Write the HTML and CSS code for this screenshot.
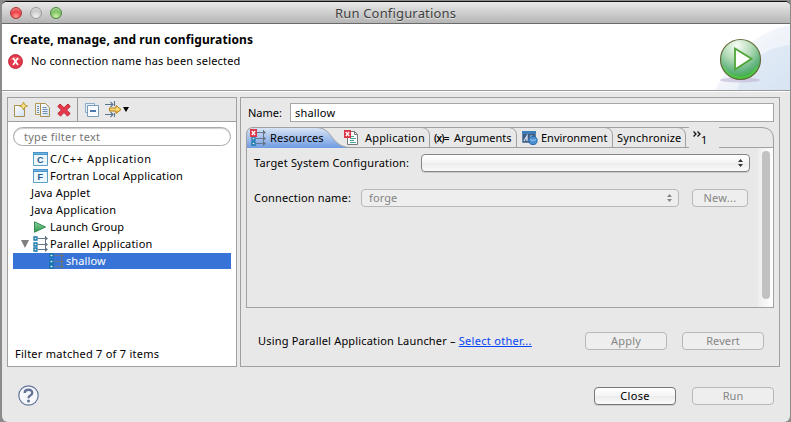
FILE: index.html
```html
<!DOCTYPE html>
<html lang="en">
<head>
<meta charset="utf-8">
<title>Run Configurations</title>
<link rel="stylesheet" href="styles.css">
</head>
<body>
<svg class="defs" width="0" height="0">
  <defs>
    <linearGradient id="paper" x2="1" y2="1"><stop stop-color="#fff"/><stop offset="1" stop-color="#cfdff1"/></linearGradient>
    <linearGradient id="gold" x2="0" y2="1"><stop stop-color="#fff6b0"/><stop offset="1" stop-color="#f0bd35"/></linearGradient>
    <linearGradient id="tabfill" x2="0" y2="1"><stop stop-color="#dbe5f6"/><stop offset="1" stop-color="#6f9ce3"/></linearGradient>
    <linearGradient id="leaf" x2="0" y2="1"><stop stop-color="#8fd0a0"/><stop offset="1" stop-color="#2a9a4c"/></linearGradient>
    <linearGradient id="wash" x2="1" y2="1"><stop stop-color="#fff"/><stop offset="1" stop-color="#d3def0"/></linearGradient>
    <radialGradient id="orb" cx=".42" cy=".15" r=".88"><stop stop-color="#f7fcf5"/><stop offset=".4" stop-color="#b5dcb9"/><stop offset=".75" stop-color="#5fb37c"/><stop offset="1" stop-color="#2fae22"/></radialGradient>
    <symbol id="parallel" viewBox="0 0 16 16">
      <path d="M5 2.500h9M5 8.500h9M5 13.500h9M12.500 0v15" fill="none" stroke="#66788c"/>
      <path d="M12 0l3 2.500-3 2.500zM12 6l3 2.500-3 2.500zM12 11l3 2.500-3 2.500z" fill="#66737f"/>
      <path d="M1 1h3v3H1zM1 7h3v3H1zM1 12h3v3H1z" fill="#e8f6ff" stroke="#1474a8" stroke-width="1.300"/>
    </symbol>
  </defs>
</svg>
<div class="window">
  <header class="titlebar">
    <i class="light red"></i><i class="light gray"></i><i class="light green"></i>
    <span class="title">Run Configurations</span>
  </header>

  <section class="banner">
    <div class="messages">
      <h1>Create, manage, and run configurations</h1>
      <p>
        <svg width="15" height="15" viewBox="0 0 15 15"><circle cx="7.500" cy="7.500" r="6.900" fill="#e4384b" stroke="#bd2438"/><path d="M2 6a6 5 0 0 1 11 0z" fill="#ef7a84" opacity=".6"/><path d="M5 4l5 7M10 4l-5 7" stroke="#fff" stroke-width="1.700"/></svg>
        <span>No connection name has been selected</span>
      </p>
    </div>
    <svg class="art" width="75" height="66" viewBox="0 0 75 66">
      <path d="M0 66C18 32 40 7 75 1v65z" fill="url(#wash)" opacity=".65"/>
      <path d="M22 66C32 36 50 24 75 21v45z" fill="#c9d9f0" opacity=".38"/>
      <ellipse cx="25" cy="56" rx="20" ry="2.500" fill="#bcaed0" opacity=".55"/>
      <circle cx="25.500" cy="35.500" r="20" fill="url(#orb)" stroke="#656c3c" stroke-width="1.200"/>
      <path d="M9 43a18 18 0 0 0 33 0" fill="none" stroke="#5fdc42" stroke-width="2" opacity=".45"/>
      <path d="M20 24.500L36.500 34.700 20 45.500z" fill="#fff" stroke="#4ea536" stroke-width="1.800"/>
    </svg>
  </section>

  <main class="content">
    <aside class="panel tree-panel">
      <div class="toolbar">
        <svg class="tool" width="14" height="16" viewBox="0 0 14 16"><path d="M.5 3.500h10v11H.5z" fill="url(#paper)" stroke="#a98f4d"/><path d="M9.500 0l1.200 2.800 2.800 1.200-2.800 1.200L9.500 8 8.300 5.200 5.500 4l2.800-1.200z" fill="#f8e28a" stroke="#b48a1c" stroke-width=".8"/></svg>
        <svg class="tool" width="16" height="16" viewBox="0 0 16 16"><path d="M.5 1.500h8v11h-8z" fill="#e9f0f8" stroke="#b49b55"/><path d="M5.500 1.500h5l4 4v9h-9z" fill="url(#paper)" stroke="#a98f4d"/><path d="M7.500 5.500h4M7.500 7.500h5M7.500 9.500h5M7.500 11.500h5M2 4.500h2M2 6.500h2M2 8.500h2M2 10.500h2" stroke="#6f8fb5"/></svg>
        <svg class="tool" width="14" height="14" viewBox="0 0 14 14"><path d="M3 1l4 3.700L11 1l2.200 2.500L9.600 7l3.600 3.500-2.700 2.600L7 9.500l-3.500 3.600-2.700-2.600L4.400 7 .8 3.500z" fill="#e7374a" stroke="#bd2a38"/></svg>
        <i class="divider"></i>
        <svg class="tool" width="14" height="14" viewBox="0 0 14 14"><path d="M.5.500h9v9h-9z" fill="#e7f1fa" stroke="#8ba9c2"/><path d="M2.500 2.500h11v11h-11z" fill="#f7fbff" stroke="#789bb7"/><path d="M5 8h6" stroke="#174d91" stroke-width="1.500"/></svg>
        <svg class="tool" width="17" height="17" viewBox="0 0 17 17"><path d="M0 3.500h8M0 13.500h8M9.500 0v5M9.500 12v4M5.500 1L8 3.500 5.500 6M5.500 11L8 13.500 5.500 16" fill="none" stroke="#5c7590" stroke-width="1.100"/><path d="M4.500 7H11V4.500l5 4-5 4V10H4.500z" fill="url(#gold)" stroke="#b67d12"/></svg>
        <i class="arrow"></i>
      </div>
      <div class="filter">type filter text</div>
      <ul class="tree">
        <li class="icon-row"><svg width="15" height="14" viewBox="0 0 15 14"><path d="M.5.500h14v13H.5z" fill="#edf7ff" stroke="#609fc4"/><path d="M0 0h15v3H0z" fill="#4b94c7"/><path d="M1 1h13v1H1z" fill="#6fb4df"/><text x="7.300" y="11.300">C</text></svg><span class="t-c">C/C++ Application</span></li>
        <li class="icon-row"><svg width="15" height="14" viewBox="0 0 15 14"><path d="M.5.500h14v13H.5z" fill="#edf7ff" stroke="#609fc4"/><path d="M0 0h15v3H0z" fill="#4b94c7"/><path d="M1 1h13v1H1z" fill="#6fb4df"/><text x="7.300" y="11.300">F</text></svg><span>Fortran Local Application</span></li>
        <li class="plain"><span>Java Applet</span></li>
        <li class="plain"><span class="t-jp">Java Application</span></li>
        <li class="icon-row"><svg width="15" height="12" viewBox="0 0 15 12"><path d="M1.500.800L12.500 6l-11 5.200z" fill="url(#leaf)" stroke="#388b50"/></svg><span class="snug">Launch Group</span></li>
        <li class="parent"><i class="disclosure"></i><svg width="16" height="16"><use href="#parallel"/></svg><span>Parallel Application</span></li>
        <li class="selected"><svg width="16" height="16"><use href="#parallel"/></svg><span class="snug">shallow</span></li>
      </ul>
      <p class="matches">Filter matched 7 of 7 items</p>
    </aside>

    <section class="panel editor">
      <div class="name-row"><label class="tight">Name:</label><div class="name-field">shallow</div></div>
      <div class="folder">
        <div class="tabs">
          <svg class="tab-lines" width="528" height="21" viewBox="0 0 528 21">
            <path d="M0 21V8Q0 .500 7 .500H70C88 .500 84 20.500 105 20.500V21z" fill="url(#tabfill)"/>
            <g fill="none" stroke="#a0a0a0">
              <path d="M.5 21V8Q.5.500 7 .500H443M473 .500H516Q527.500 1 527.500 12v9"/>
              <path d="M70 .500C88 .500 84 20.500 105 20.500H443M473 20.500H528"/>
              <path d="M176 .500Q183 1 183.500 8V20M263 .500Q270 1 270.500 8V20M359 .500Q366 1 366.500 8V20M432 .500Q439 1 439.500 8V20"/>
            </g>
          </svg>
          <div class="tab resources"><svg width="17" height="17" viewBox="0 0 17 17"><use href="#parallel" x="1" y="1" width="16" height="16"/><path d="M0 0h7v8H0z" fill="#dc3547"/><path d="M1.800 2l3.400 4M5.200 2L1.800 6" stroke="#fff" stroke-width="1.300"/></svg><span class="snug">Resources</span></div>
          <div class="tab application"><svg width="15" height="16" viewBox="0 0 15 16"><path d="M3.500 1.500h7l3 3v10h-10z" fill="#fff" stroke="#777"/><path d="M10.500 1.500v3h3" fill="none" stroke="#777"/><path d="M7 6.500h3M6 8.500h6M6 10.500h4M6 12.500h6" stroke="#45a69b"/><path d="M0 0h7v8H0z" fill="#dc3547"/><path d="M1.800 2l3.400 4M5.200 2L1.800 6" stroke="#fff" stroke-width="1.300"/></svg><span>Application</span></div>
          <div class="tab arguments"><b>(x)=</b><span class="tight">Arguments</span></div>
          <div class="tab environment"><svg width="16" height="14" viewBox="0 0 16 14"><path d="M.5.500h13v11H.5z" fill="#405e83" stroke="#6784a4"/><path d="M0 0h14v3H0z" fill="#3f7db9"/><path d="M2 10l3-5v5M7 10l2-5 3 1" stroke="#d2deed" stroke-width="1.400" fill="none"/><circle cx="11" cy="9.500" r="4.100" fill="#4b91d2" stroke="#2867a6"/><path d="M8 8.500q3 2 6 0" fill="none" stroke="#9ccaf0"/></svg><span class="tight">Environment</span></div>
          <div class="tab synchronize"><span>Synchronize</span></div>
          <div class="overflow"><svg width="8" height="6" viewBox="0 0 8 6"><path d="M.5.500L3 3 .5 5.500M4.500.500L7 3 4.500 5.500" fill="none" stroke="#111" stroke-width="1.300"/></svg><span>1</span></div>
        </div>
        <div class="page">
          <div class="form">
            <div class="form-row system"><label>Target System Configuration:</label><div class="combo"><svg width="5" height="8" viewBox="0 0 5 8"><path d="M0 3L2.500 0 5 3zM0 5h5L2.500 8z"/></svg></div></div>
            <div class="form-row connection"><label>Connection name:</label><div class="combo disabled"><span class="snug">forge</span><svg width="5" height="8" viewBox="0 0 5 8"><path d="M0 3L2.500 0 5 3zM0 5h5L2.500 8z"/></svg></div><button class="new" disabled><span class="loose">New...</span></button></div>
          </div>
          <div class="scrollbar"><i></i></div>
        </div>
      </div>
      <div class="launcher"><p><span>Using Parallel Application Launcher – </span><a class="loose">Select other...</a></p><button disabled><span>Apply</span></button><button disabled><span class="snug">Revert</span></button></div>
    </section>
  </main>

  <footer class="footer">
    <svg width="21" height="21" viewBox="0 0 21 21"><circle cx="10.500" cy="10.500" r="9.700" fill="#f6f7fa" stroke="#61759a" stroke-width="1.200"/><path d="M6.700 8Q6.700 4.800 10.500 4.800T14.200 8Q14.200 9.800 12 10.700 10.500 11.500 10.500 13.200" fill="none" stroke="#637398" stroke-width="2.400"/><circle cx="10.500" cy="16" r="1.500" fill="#637398"/></svg>
    <div class="actions"><button><span class="loose">Close</span></button><button disabled><span class="snug">Run</span></button></div>
  </footer>
</div>
</body>
</html>
```
FILE: styles.css
```css
* { box-sizing: border-box; }
html, body { height: 100%; }
body { margin: 0; padding: 1px 1px 0 2px; overflow: hidden; background: #8b8b8b; color: #000; font: 11px/16px "Noto Sans", "Open Sans", sans-serif; letter-spacing: .18px; }
h1, p, ul { margin: 0; padding: 0; }
svg { display: block; flex: none; }
span, a, label { white-space: nowrap; }
.defs { position: absolute; }
.tight { letter-spacing: 0; }
.snug { letter-spacing: .1px; }
.loose { letter-spacing: .3px; }
.window { width: 788px; height: 421px; border-top: 1px solid #111; border-radius: 5px 5px 6px 6px; background: #e8e8e8; overflow: hidden; }
.titlebar { position: relative; display: flex; align-items: center; gap: 8px; height: 22px; padding-left: 8px; border-bottom: 1px solid #6b6b6b; background: linear-gradient(#e9e9e9, #b5b5b5); }
.light { width: 12px; height: 12px; border: 1px solid #777; border-radius: 50%; }
.red { border-color: #a83636; background: radial-gradient(circle at 50% 85%, #ff9a93, #ec4048 50%, #f0a09e); }
.gray { border-color: #999; background: radial-gradient(circle at 50% 85%, #f0f0f0, #c9c9c9 60%, #e5e5e5); }
.green { border-color: #4e853f; background: radial-gradient(circle at 50% 85%, #c9f3a7, #7dc262 55%, #c1e0b4); }
.title { position: absolute; left: 333px; top: 3px; font-size: 13px; letter-spacing: .17px; color: #3f3f3f; text-shadow: 0 1px #e0e0e0; }
.banner { display: flex; justify-content: space-between; height: 67px; background: #fff; border-bottom: 1px solid #999; }
.messages { padding: 8px 0 0 8px; }
.messages h1 { font-size: 12px; line-height: 16px; font-weight: 700; letter-spacing: .12px; white-space: nowrap; }
.messages p { display: flex; align-items: center; gap: 8px; margin-top: 5px; margin-left: -2px; height: 16px; }
.content { display: flex; gap: 3px; padding: 5px 0 0 5px; border-top: 1px solid #fff; height: 276px; }
.panel { height: 270px; border: 1px solid #a0a0a0; }
.tree-panel { width: 230px; background: #fff; display: flex; flex-direction: column; }
.toolbar { display: flex; align-items: center; height: 24px; padding-left: 6px; border-bottom: 1px solid #a0a0a0; background: #e8e8e8; }
.tool { margin-right: 7px; }
.toolbar .tool:nth-of-type(2) { margin-right: 6px; }
.toolbar .tool:nth-of-type(3) { margin-right: 6px; }
.divider { width: 1px; height: 23px; background: #999; margin-right: 7px; }
.divider + .tool { margin-right: 6px; }
.arrow { border: 3px solid transparent; border-top: 5px solid #000; border-bottom: 0; margin-left: -6px; }
.filter { height: 19px; margin: 5px 5px 4px; padding: 1px 0 0 10px; border: 1px solid #aaa; border-radius: 10px; box-shadow: inset 0 1px 1px #ccc; color: #777; line-height: 16px; letter-spacing: .25px; }
.tree { list-style: none; margin: 0 5px; }
.tree li { display: flex; align-items: center; height: 17px; }
.tree .icon-row { padding-left: 20px; gap: 2px; }
.tree .plain { padding-left: 18px; }
.tree .parent { padding-left: 8px; gap: 1px; }
.tree .selected { margin-top: 1px; padding-left: 36px; gap: 1px; height: 16px; color: #fff; background: #3874d7; }
.tree text { font: 700 9px "Liberation Sans", sans-serif; letter-spacing: 0; text-anchor: middle; fill: #275b91; }
.tree .t-c { letter-spacing: .6px; }
.tree .t-jp { letter-spacing: .22px; }
.disclosure { border: 4.5px solid transparent; border-top: 8px solid #7f7f7f; border-bottom: 0; margin-right: 3px; }
.matches { margin: auto 0 4px 7px; letter-spacing: .25px; }
.editor { width: 540px; padding: 5px; }
.name-row { display: flex; align-items: center; height: 19px; }
.name-row label { width: 44px; padding-left: 2px; }
.name-field { flex: 1; height: 19px; background: #fff; border: 1px solid #a6a6a6; padding: 1px 4px; }
.folder { margin-top: 5px; height: 181px; }
.tabs { position: relative; display: flex; height: 21px; width: 528px; }
.tab-lines { position: absolute; inset: 0; }
.tab { position: relative; display: flex; align-items: center; }
.resources { width: 98px; padding-left: 4px; gap: 3px; }
.application { width: 86px; gap: 6px; }
.arguments { width: 87px; padding-left: 4px; gap: 4px; }
.arguments b { font-size: 10px; font-weight: 600; width: 16px; letter-spacing: -.8px; }
.environment { width: 95px; padding-left: 5px; gap: 3px; }
.synchronize { width: 77px; padding-left: 5px; }
.overflow { position: relative; display: flex; padding: 4px 0 0 4px; }
.overflow span { padding-top: 1px; font-size: 11px; }
.page { display: flex; height: 160px; border: 1px solid #a0a0a0; border-top: 0; }
.form { flex: 1; padding: 6px 0 0 7px; }
.form-row { display: flex; align-items: center; height: 18px; }
.connection { margin-top: 17px; }
.system label { width: 167px; }
.connection label { width: 107px; }
.combo { display: flex; align-items: center; width: 329px; height: 18px; border: 1px solid #858585; border-radius: 4px; background: linear-gradient(#fff, #f4f4f4 50%, #ececec 52%, #fafafa); box-shadow: 0 1px #ccc; padding: 0 6px 0 7px; }
.combo svg { margin-left: auto; fill: #333; }
.combo.disabled { width: 318px; color: #858585; border-color: #b8b8b8; background: #eee; box-shadow: none; }
.combo.disabled svg { fill: #858585; }
.scrollbar { width: 15px; padding: 3px 3px 0 4px; background: linear-gradient(90deg, #ededed, #fff); }
.scrollbar i { display: block; width: 8px; height: 148px; border-radius: 4px; background: #c1c1c1; }
button { display: flex; align-items: center; justify-content: center; width: 82px; height: 18px; padding: 0; border: 1px solid #777; border-radius: 4px; background: linear-gradient(#fff, #f4f4f4 50%, #ececec 52%, #fafafa); color: #000; font: inherit; letter-spacing: inherit; box-shadow: 0 1px #ccc; }
button:disabled { color: #858585; border-color: #b8b8b8; background: #eee; box-shadow: none; }
.new { width: 56px; margin-left: 13px; }
.launcher { display: flex; align-items: center; padding: 24px 10px 0 12px; }
.launcher p { width: 327px; white-space: nowrap; }
.launcher button + button { margin-left: 15px; }
.launcher a { color: #0645f5; text-decoration: underline; }
.footer { display: flex; justify-content: space-between; align-items: center; padding: 18px 16px 0 16px; }
.actions { display: flex; gap: 16px; }
```
